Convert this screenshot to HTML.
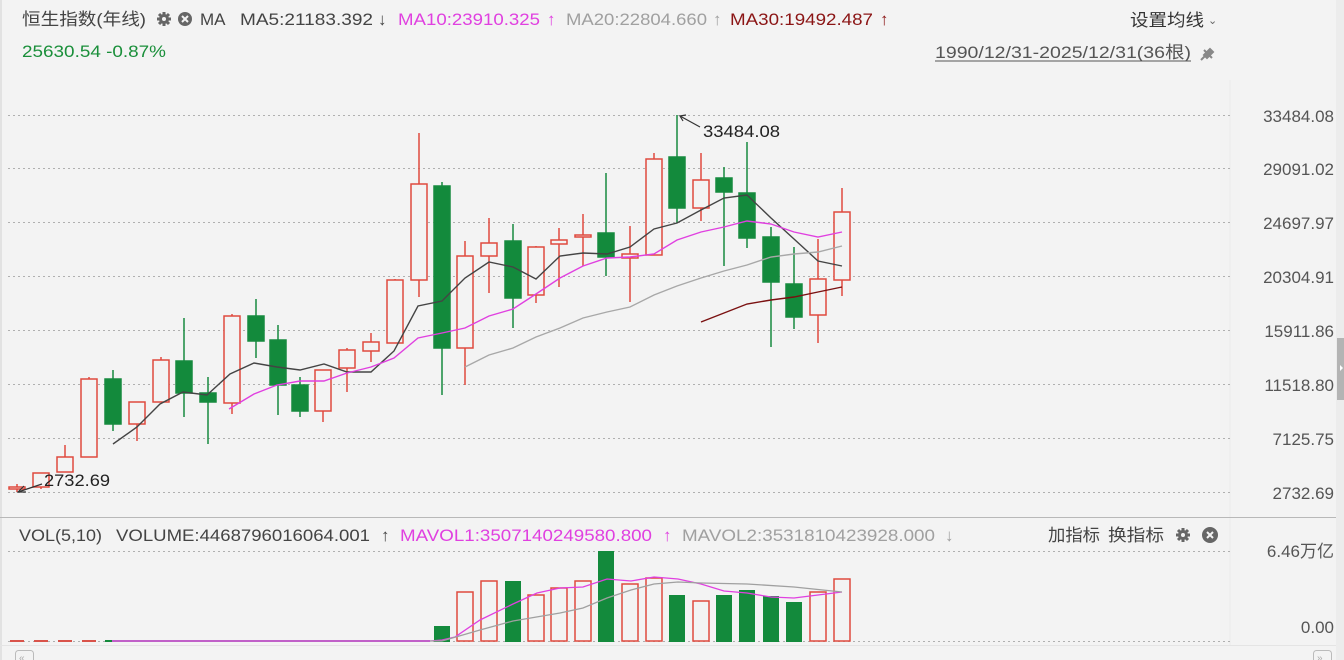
<!DOCTYPE html>
<html><head><meta charset="utf-8"><style>
html,body{margin:0;padding:0;background:#f3f3f3;width:1344px;height:660px;overflow:hidden}
svg{display:block}
text{font-family:"Liberation Sans","Noto Sans CJK SC",sans-serif}
</style></head><body>
<svg width="1344" height="660" viewBox="0 0 1344 660" xmlns="http://www.w3.org/2000/svg">
<rect width="1344" height="660" fill="#f3f3f3"/>
<rect x="0" y="0" width="2" height="660" fill="#e2e2e2"/>
<rect x="1336" y="0" width="8" height="660" fill="#ececec"/>
<rect x="1337" y="338" width="7" height="62" fill="#b4b4b4"/>
<path d="M1340 365 l3 3 -3 3z" fill="#fff"/>
<line x1="1230" y1="80" x2="1230" y2="645" stroke="#ebebeb"/>

<!-- header -->
<g font-size="17" fill="#444">
<text x="22" y="25" textLength="124" lengthAdjust="spacingAndGlyphs">恒生指数(年线)</text>
<text x="200" y="25">MA</text>
<text x="240" y="25" textLength="133" lengthAdjust="spacingAndGlyphs">MA5:21183.392</text>
<text x="378" y="25">↓</text>
<text x="398" y="25" fill="#e040e0" textLength="142" lengthAdjust="spacingAndGlyphs">MA10:23910.325</text>
<text x="547" y="25" fill="#e040e0">↑</text>
<text x="566" y="25" fill="#a0a0a0" textLength="141" lengthAdjust="spacingAndGlyphs">MA20:22804.660</text>
<text x="713" y="25" fill="#a0a0a0">↑</text>
<text x="730" y="25" fill="#8b1515" textLength="143" lengthAdjust="spacingAndGlyphs">MA30:19492.487</text>
<text x="880" y="25" fill="#8b1515">↑</text>
<text x="22" y="57" fill="#1a8f3a" textLength="144" lengthAdjust="spacingAndGlyphs">25630.54 -0.87%</text>
<text x="1130" y="26" fill="#333" textLength="74" lengthAdjust="spacingAndGlyphs">设置均线</text>
<text x="1208" y="24" font-size="11" fill="#666">⌄</text>
<text x="935" y="58" fill="#555" textLength="256" lengthAdjust="spacingAndGlyphs">1990/12/31-2025/12/31(36根)</text>
</g>
<line x1="935" y1="61" x2="1191" y2="61" stroke="#555"/>
<path d="M1201 60 l6 -6 m-3 -4 l8 8 m-2 -9 l-6 6 l3 3 l6 -6z" stroke="#888" stroke-width="2" fill="#888"/>
<g fill="#666">
<circle cx="164" cy="19" r="5"/>
<g stroke="#666" stroke-width="3"><line x1="164" y1="12" x2="164" y2="26"/><line x1="157" y1="19" x2="171" y2="19"/><line x1="159" y1="14" x2="169" y2="24"/><line x1="169" y1="14" x2="159" y2="24"/></g>
<circle cx="164" cy="19" r="2" fill="#f3f3f3"/>
<circle cx="185" cy="19" r="7"/>
<path d="M182 16 l6 6 M188 16 l-6 6" stroke="#f3f3f3" stroke-width="2"/>
</g>

<!-- grid -->
<g stroke="#b0b0b0" stroke-dasharray="2 3" stroke-width="1">
<line x1="8" y1="115.5" x2="1230" y2="115.5"/>
<line x1="8" y1="168.5" x2="1230" y2="168.5"/>
<line x1="8" y1="222.5" x2="1230" y2="222.5"/>
<line x1="8" y1="276.5" x2="1230" y2="276.5"/>
<line x1="8" y1="330.5" x2="1230" y2="330.5"/>
<line x1="8" y1="384.5" x2="1230" y2="384.5"/>
<line x1="8" y1="438.5" x2="1230" y2="438.5"/>
<line x1="8" y1="492.5" x2="1230" y2="492.5"/>
<line x1="8" y1="551.5" x2="1230" y2="551.5"/>
<line x1="8" y1="641.5" x2="1230" y2="641.5"/>
</g>
<g font-size="17" fill="#555" text-anchor="end">
<text x="1334" y="122">33484.08</text>
<text x="1334" y="175">29091.02</text>
<text x="1334" y="229">24697.97</text>
<text x="1334" y="283">20304.91</text>
<text x="1334" y="337">15911.86</text>
<text x="1334" y="391">11518.80</text>
<text x="1334" y="445">7125.75</text>
<text x="1334" y="499">2732.69</text>
<text x="1334" y="557">6.46万亿</text>
<text x="1334" y="633">0.00</text>
</g>

<!-- candles -->
<g stroke="#e04a3e" stroke-width="1.5" fill="#f3f3f3">
<line x1="17" y1="484" x2="17" y2="492"/><rect x="9" y="487" width="16" height="2"/>
<line x1="41" y1="473" x2="41" y2="489"/><rect x="33" y="473" width="16" height="14"/>
<line x1="65" y1="445" x2="65" y2="472"/><rect x="57" y="457" width="16" height="15"/>
<line x1="89" y1="377" x2="89" y2="457"/><rect x="81" y="379" width="16" height="78"/>
<line x1="137" y1="402" x2="137" y2="441"/><rect x="129" y="402" width="16" height="22"/>
<line x1="161" y1="357" x2="161" y2="402"/><rect x="153" y="360" width="16" height="42"/>
<line x1="232" y1="314" x2="232" y2="414"/><rect x="224" y="316" width="16" height="87"/>
<line x1="323" y1="370" x2="323" y2="422"/><rect x="315" y="370" width="16" height="41"/>
<line x1="347" y1="348" x2="347" y2="392"/><rect x="339" y="350" width="16" height="18"/>
<line x1="371" y1="333" x2="371" y2="362"/><rect x="363" y="342" width="16" height="9"/>
<line x1="395" y1="279" x2="395" y2="343"/><rect x="387" y="280" width="16" height="63"/>
<line x1="419" y1="133" x2="419" y2="297"/><rect x="411" y="184" width="16" height="96"/>
<line x1="465" y1="241" x2="465" y2="385"/><rect x="457" y="256" width="16" height="92"/>
<line x1="489" y1="218" x2="489" y2="293"/><rect x="481" y="243" width="16" height="13"/>
<line x1="536" y1="246" x2="536" y2="303"/><rect x="528" y="247" width="16" height="48"/>
<line x1="559" y1="228" x2="559" y2="287"/><rect x="551" y="240" width="16" height="4"/>
<line x1="583" y1="214" x2="583" y2="266"/><rect x="575" y="235" width="16" height="2"/>
<line x1="630" y1="226" x2="630" y2="302"/><rect x="622" y="254" width="16" height="4"/>
<line x1="654" y1="153" x2="654" y2="255"/><rect x="646" y="159" width="16" height="96"/>
<line x1="701" y1="153" x2="701" y2="221"/><rect x="693" y="180" width="16" height="28"/>
<line x1="818" y1="239" x2="818" y2="343"/><rect x="810" y="279" width="16" height="36"/>
<line x1="842" y1="188" x2="842" y2="296"/><rect x="834" y="212" width="16" height="68"/>
</g>
<g stroke="#168a3e" stroke-width="1.5" fill="#138a3c">
<line x1="113" y1="370" x2="113" y2="431"/><rect x="105" y="379" width="16" height="45"/>
<line x1="184" y1="318" x2="184" y2="417"/><rect x="176" y="361" width="16" height="32"/>
<line x1="208" y1="377" x2="208" y2="444"/><rect x="200" y="393" width="16" height="9"/>
<line x1="256" y1="299" x2="256" y2="358"/><rect x="248" y="316" width="16" height="25"/>
<line x1="278" y1="325" x2="278" y2="415"/><rect x="270" y="340" width="16" height="45"/>
<line x1="300" y1="377" x2="300" y2="417"/><rect x="292" y="385" width="16" height="26"/>
<line x1="442" y1="182" x2="442" y2="395"/><rect x="434" y="186" width="16" height="162"/>
<line x1="513" y1="224" x2="513" y2="328"/><rect x="505" y="241" width="16" height="57"/>
<line x1="606" y1="173" x2="606" y2="276"/><rect x="598" y="233" width="16" height="24"/>
<line x1="677" y1="115" x2="677" y2="223"/><rect x="669" y="157" width="16" height="51"/>
<line x1="724" y1="167" x2="724" y2="266"/><rect x="716" y="178" width="16" height="14"/>
<line x1="747" y1="142" x2="747" y2="248"/><rect x="739" y="193" width="16" height="45"/>
<line x1="771" y1="227" x2="771" y2="347"/><rect x="763" y="237" width="16" height="45"/>
<line x1="794" y1="247" x2="794" y2="329"/><rect x="786" y="284" width="16" height="33"/>
</g>

<!-- MAs -->
<g fill="none" stroke-width="1.4">
<polyline stroke="#444" points="113,444 137,427 160,404 183,392 207,395 230,374 254,363 277,367 300,370 324,364 347,372 371,372 394,351 418,306 442,301 465,278 489,262 513,267 536,279 560,256 583,253 607,254 630,247 654,229 677,223 701,210 724,198 747,195 771,218 794,239 818,261 842,266"/>
<polyline stroke="#e040e0" points="229,409 254,394 277,385 300,381 324,381 347,373 371,367 394,358 418,338 442,333 465,328 489,316 513,309 536,294 560,278 583,266 607,258 630,257 654,254 677,240 701,232 724,227 747,221 771,224 794,232 818,237 842,232"/>
<polyline stroke="#a8a8a8" points="465,367 489,355 513,348 536,337 560,328 583,318 607,312 630,307 654,295 677,286 701,278 724,271 747,265 771,257 794,254 818,252 842,246"/>
<polyline stroke="#7a1010" points="701,322 747,304 771,300 794,297 818,292 842,287"/>
</g>
<g stroke="#333" stroke-width="1.2" fill="none">
<line x1="42" y1="484" x2="18" y2="492"/><path d="M24 486 l-6 6 l8 0"/>
<line x1="700" y1="127" x2="680" y2="116"/><path d="M683 121 l-3 -5 l6 -1"/>
</g>
<text x="44" y="486" font-size="17" fill="#222" textLength="66" lengthAdjust="spacingAndGlyphs">2732.69</text>
<text x="703" y="137" font-size="17" fill="#222" textLength="77" lengthAdjust="spacingAndGlyphs">33484.08</text>

<!-- volume panel -->
<line x1="0" y1="517.5" x2="1336" y2="517.5" stroke="#b8b8b8"/>
<g font-size="17" fill="#444">
<text x="19" y="541" textLength="83" lengthAdjust="spacingAndGlyphs">VOL(5,10)</text>
<text x="116" y="541" textLength="254" lengthAdjust="spacingAndGlyphs">VOLUME:4468796016064.001</text>
<text x="381" y="541">↑</text>
<text x="400" y="541" fill="#e040e0" textLength="252" lengthAdjust="spacingAndGlyphs">MAVOL1:3507140249580.800</text>
<text x="663" y="541" fill="#e040e0">↑</text>
<text x="682" y="541" fill="#a0a0a0" textLength="253" lengthAdjust="spacingAndGlyphs">MAVOL2:3531810423928.000</text>
<text x="945" y="541" fill="#a0a0a0">↓</text>
<text x="1048" y="541" fill="#444" textLength="52" lengthAdjust="spacingAndGlyphs">加指标</text>
<text x="1108" y="541" fill="#444" textLength="56" lengthAdjust="spacingAndGlyphs">换指标</text>
</g>
<g fill="#666">
<circle cx="1183" cy="535" r="5"/>
<g stroke="#666" stroke-width="3"><line x1="1183" y1="528" x2="1183" y2="542"/><line x1="1176" y1="535" x2="1190" y2="535"/><line x1="1178" y1="530" x2="1188" y2="540"/><line x1="1188" y1="530" x2="1178" y2="540"/></g>
<circle cx="1183" cy="535" r="2" fill="#f3f3f3"/>
<circle cx="1210" cy="535" r="8"/>
<path d="M1207 532 l6 6 M1213 532 l-6 6" stroke="#f3f3f3" stroke-width="2"/>
</g>
<g stroke="#d9534a" stroke-width="2">
<line x1="10" y1="641" x2="24" y2="641"/><line x1="34" y1="641" x2="48" y2="641"/><line x1="58" y1="641" x2="72" y2="641"/><line x1="82" y1="641" x2="96" y2="641"/>
</g>
<line x1="105" y1="641" x2="112" y2="641" stroke="#138a3c" stroke-width="2"/>
<line x1="112" y1="641" x2="430" y2="641" stroke="#c060c8" stroke-width="2"/>
<g stroke="#e04a3e" stroke-width="1.5" fill="#f3f3f3">
<rect x="457" y="592" width="16" height="49"/>
<rect x="481" y="581" width="16" height="60"/>
<rect x="528" y="595" width="16" height="46"/>
<rect x="551" y="588" width="16" height="53"/>
<rect x="575" y="581" width="16" height="60"/>
<rect x="622" y="584" width="16" height="57"/>
<rect x="646" y="578" width="16" height="63"/>
<rect x="693" y="601" width="16" height="40"/>
<rect x="810" y="592" width="16" height="49"/>
<rect x="834" y="579" width="16" height="62"/>
</g>
<g fill="#138a3c">
<rect x="434" y="626" width="16" height="16"/>
<rect x="505" y="581" width="16" height="61"/>
<rect x="598" y="551" width="16" height="91"/>
<rect x="669" y="595" width="16" height="47"/>
<rect x="716" y="595" width="16" height="47"/>
<rect x="739" y="590" width="16" height="52"/>
<rect x="763" y="596" width="16" height="46"/>
<rect x="786" y="602" width="16" height="40"/>
</g>
<g fill="none" stroke-width="1.3">
<polyline stroke="#e040e0" points="430,641 442,640 455,637 480,620 513,604 537,593 560,588 583,587 607,579 631,581 654,577 678,579 701,584 724,591 747,593 771,597 794,598 818,595 842,592"/>
<polyline stroke="#a0a0a0" points="430,641 442,641 480,630 513,621 560,613 583,608 607,598 631,590 654,584 678,582 701,583 747,584 794,587 842,592"/>
</g>
<line x1="0" y1="645.5" x2="1336" y2="645.5" stroke="#e4e4e4"/>
<rect x="15.5" y="650.5" width="18" height="14" rx="3" fill="none" stroke="#bbb"/>
<text x="19" y="661" font-size="10" fill="#aaa">«</text>
<rect x="1313.5" y="650.5" width="18" height="14" rx="3" fill="none" stroke="#bbb"/>
<text x="1317" y="661" font-size="10" fill="#aaa">»</text>
</svg>
</body></html>
